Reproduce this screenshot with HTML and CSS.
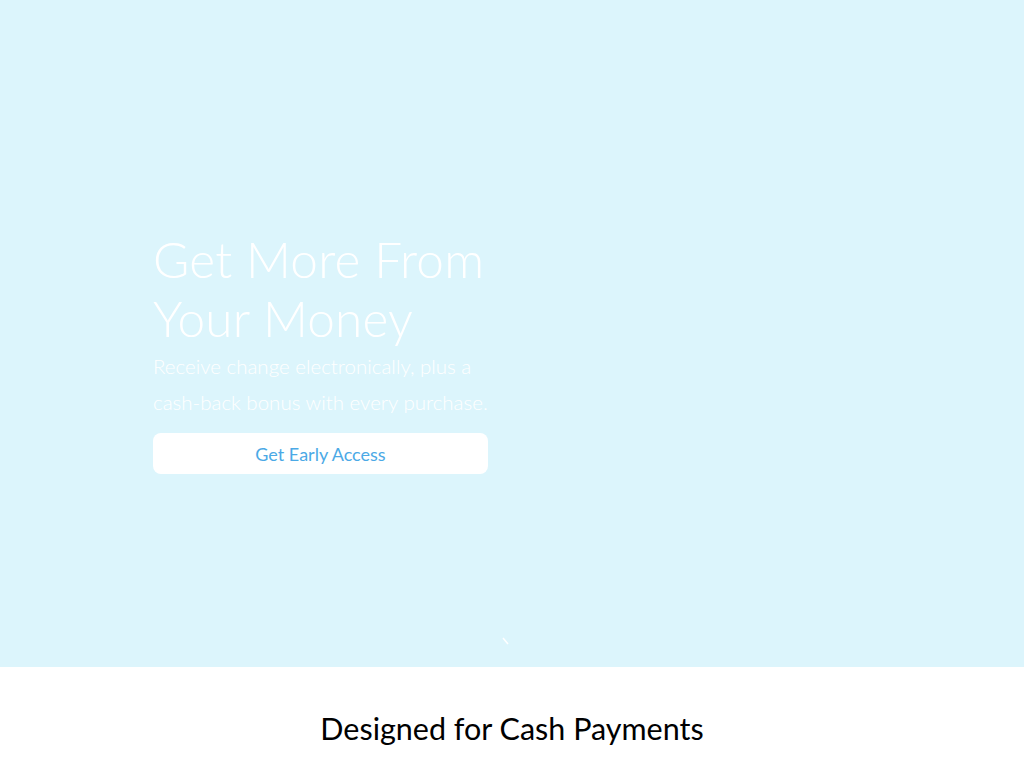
FILE: index.html
```html
<!DOCTYPE html>
<html>
<head>
<meta charset="utf-8">
<link rel="stylesheet" href="styles.css">
</head>
<body>
<section class="hero">
  <div class="hero-content">
    <h1 class="hero-title">Get More From<br>Your Money</h1>
    <p class="hero-sub">Receive change electronically, plus a<br>cash-back bonus with every purchase.</p>
    <a class="cta" href="#">Get Early Access</a>
  </div>
  <svg class="scroll-mark" width="8" height="8" viewBox="0 0 8 8"><path d="M1 1 L6 7" stroke="#fff" stroke-width="1.6" fill="none"/></svg>
</section>
<section class="features">
  <h2 class="features-title">Designed for Cash Payments</h2>
</section>
</body>
</html>
```
FILE: styles.css
```css
html, body {
  margin: 0;
  padding: 0;
}
body {
  font-family: "Lato", "Open Sans", sans-serif;
  background: #fff;
}
.hero {
  position: relative;
  height: 667px;
  background: #dcf5fc;
  box-sizing: border-box;
  padding-top: 230px;
  padding-left: 153px;
}
.hero-content {
  width: 360px;
}
.hero-title {
  margin: 0;
  font-weight: 300;
  font-size: 49.5px;
  line-height: 59px;
  color: #fff;
  letter-spacing: 0.2px;
}
.hero-sub {
  margin: 0;
  font-weight: 300;
  font-size: 20.5px;
  line-height: 36px;
  color: #fff;
  white-space: nowrap;
}
.cta {
  display: flex;
  align-items: center;
  justify-content: center;
  margin-top: 13px;
  width: 335px;
  height: 41px;
  background: #fff;
  border-radius: 8px;
  color: #4ba9e6;
  font-size: 18px;
  font-weight: 400;
  text-decoration: none;
}
.scroll-mark {
  position: absolute;
  left: 502px;
  top: 637px;
}
.features {
  padding-top: 41px;
  text-align: center;
}
.features-title {
  margin: 0;
  font-weight: 400;
  font-size: 30.5px;
  line-height: 40px;
  color: #000;
}
```
